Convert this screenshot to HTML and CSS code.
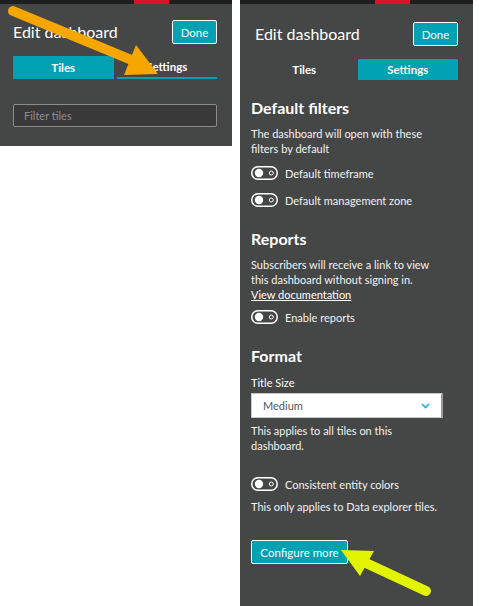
FILE: index.html
```html
<!DOCTYPE html>
<html lang="en">
<head>
<meta charset="utf-8">
<title>Edit dashboard</title>
<link rel="stylesheet" href="styles.css">
</head>
<body>
<div class="page">
  <section class="panel panel-small">
    <div class="topbar"><span class="topbar-red"></span></div>
    <div class="header">
      <h1 class="title">Edit dashboard</h1>
      <button class="btn btn-done">Done</button>
    </div>
    <div class="tabs">
      <div class="tab tab-active">Tiles</div>
      <div class="tab tab-underline">Settings</div>
    </div>
    <div class="filter">Filter tiles</div>
  </section>

  <section class="panel panel-large">
    <div class="topbar"><span class="topbar-red"></span></div>
    <div class="header header-large">
      <h1 class="title">Edit dashboard</h1>
      <button class="btn btn-done">Done</button>
    </div>
    <div class="tabs">
      <div class="tab">Tiles</div>
      <div class="tab tab-active">Settings</div>
    </div>

    <div class="settings">
      <h2 class="heading heading-first">Default filters</h2>
      <p class="text text-after-heading">The dashboard will open with these<br>filters by default</p>
      <div class="toggle-row toggle-first">
        <svg class="toggle" width="27" height="14" viewBox="0 0 27 14"><rect x="0.75" y="0.75" width="25.5" height="12.5" rx="6.25" fill="none" stroke="#fff" stroke-width="1.5"/><circle cx="8" cy="7" r="4.2" fill="#fff"/><circle cx="20.3" cy="7" r="2" fill="none" stroke="#fff" stroke-width="1"/></svg>
        <span>Default timeframe</span>
      </div>
      <div class="toggle-row toggle-next">
        <svg class="toggle" width="27" height="14" viewBox="0 0 27 14"><rect x="0.75" y="0.75" width="25.5" height="12.5" rx="6.25" fill="none" stroke="#fff" stroke-width="1.5"/><circle cx="8" cy="7" r="4.2" fill="#fff"/><circle cx="20.3" cy="7" r="2" fill="none" stroke="#fff" stroke-width="1"/></svg>
        <span>Default management zone</span>
      </div>

      <h2 class="heading heading-section">Reports</h2>
      <p class="text text-after-heading">Subscribers will receive a link to view<br>this dashboard without signing in.<br><a class="link" href="#">View documentation</a></p>
      <div class="toggle-row toggle-reports">
        <svg class="toggle" width="27" height="14" viewBox="0 0 27 14"><rect x="0.75" y="0.75" width="25.5" height="12.5" rx="6.25" fill="none" stroke="#fff" stroke-width="1.5"/><circle cx="8" cy="7" r="4.2" fill="#fff"/><circle cx="20.3" cy="7" r="2" fill="none" stroke="#fff" stroke-width="1"/></svg>
        <span>Enable reports</span>
      </div>

      <h2 class="heading heading-section">Format</h2>
      <div class="label">Title Size</div>
      <div class="select">
        <span>Medium</span>
        <svg class="chevron" width="9" height="6" viewBox="0 0 9 6"><path d="M1 1 L4.5 4.5 L8 1" fill="none" stroke="#1bb5c6" stroke-width="1.6"/></svg>
      </div>
      <p class="text text-after-select">This applies to all tiles on this<br>dashboard.</p>
      <div class="toggle-row toggle-colors">
        <svg class="toggle" width="27" height="14" viewBox="0 0 27 14"><rect x="0.75" y="0.75" width="25.5" height="12.5" rx="6.25" fill="none" stroke="#fff" stroke-width="1.5"/><circle cx="8" cy="7" r="4.2" fill="#fff"/><circle cx="20.3" cy="7" r="2" fill="none" stroke="#fff" stroke-width="1"/></svg>
        <span>Consistent entity colors</span>
      </div>
      <p class="text text-after-toggle">This only applies to Data explorer tiles.</p>
      <button class="btn btn-configure">Configure more</button>
    </div>
  </section>
</div>

<svg class="arrows" width="485" height="606" viewBox="0 0 485 606">
  <line x1="13" y1="11" x2="134" y2="61" stroke="#f5a700" stroke-width="10" stroke-linecap="round"/>
  <polygon points="136,45 124,75 158,74" fill="#f5a700"/>
  <line x1="366" y1="563" x2="426" y2="591" stroke="#e3f400" stroke-width="10" stroke-linecap="round"/>
  <polygon points="341,550 374,551 360,576" fill="#e3f400"/>
</svg>
</body>
</html>
```

FILE: styles.css
```css
* { box-sizing: border-box; }

html, body {
  margin: 0;
  padding: 0;
  background: #ffffff;
}

body {
  position: relative;
  width: 485px;
  height: 606px;
  overflow: hidden;
  font-family: Lato, "Open Sans", sans-serif;
  color: #f2f2f2;
}

.page {
  display: flex;
  align-items: flex-start;
  gap: 8px;
}

.panel {
  background: #454646;
  display: flex;
  flex-direction: column;
}

.panel-small {
  width: 232px;
  height: 146px;
}

.panel-large {
  width: 233px;
  height: 606px;
}

.topbar {
  height: 4px;
  background: #1e1e1e;
  display: flex;
}

.topbar-red {
  width: 35px;
  margin-left: 134px;
  background: #d8142a;
}

.panel-large .topbar-red {
  margin-left: 135px;
}

.header {
  display: flex;
  align-items: center;
  justify-content: space-between;
  padding: 16px 15px 0 13px;
}

.header-large {
  padding: 18px 15px 0 15px;
}

.title {
  margin: 0;
  font-size: 16px;
  font-weight: 400;
  color: #ffffff;
  line-height: 20px;
}

.btn {
  font-family: inherit;
  background: #00a1b2;
  color: #ffffff;
  border: 1px solid #ffffff;
  border-radius: 2px;
  font-size: 11.5px;
  cursor: pointer;
  padding: 0;
}

.btn-done {
  width: 45px;
  height: 24px;
}

.tabs {
  display: grid;
  grid-template-columns: 1fr 1fr;
  column-gap: 3px;
  margin: 12px 15px 0 13px;
  height: 23px;
}

.panel-large .tabs {
  margin: 13px 15px 0 14px;
  height: 21px;
}

.tab {
  display: flex;
  align-items: center;
  justify-content: center;
  font-size: 11.5px;
  font-weight: 700;
  color: #ffffff;
}

.tab-active {
  background: #00a1b2;
}

.tab-underline {
  border-bottom: 2px solid #00a1b2;
}

.filter {
  margin: 25px 15px 0 13px;
  height: 23px;
  border: 1px solid #8c8c8c;
  border-radius: 2px;
  background: #393939;
  color: #8f8f8f;
  font-size: 11px;
  display: flex;
  align-items: center;
  padding-left: 10px;
}

.settings {
  display: flex;
  flex-direction: column;
  align-items: flex-start;
  padding: 0 11px;
}

.heading {
  margin: 0;
  font-size: 16px;
  line-height: 20px;
  font-weight: 700;
  color: #ffffff;
}

.heading-first { margin-top: 18px; }
.heading-section { margin-top: 20px; }

.text {
  margin: 0;
  font-size: 11px;
  line-height: 15px;
  color: #f2f2f2;
}

.text-after-heading { margin-top: 8px; }
.text-after-select { margin-top: 5px; }
.text-after-toggle { margin-top: 6px; }

.link {
  color: #ffffff;
  text-decoration: underline;
}

.toggle-row {
  display: flex;
  align-items: center;
  gap: 7px;
  height: 18px;
  font-size: 11px;
  color: #f2f2f2;
}

.toggle { flex: none; }

.toggle-first { margin-top: 8px; }
.toggle-next { margin-top: 9px; }
.toggle-reports { margin-top: 6px; }
.toggle-colors { margin-top: 22px; }

.label {
  margin-top: 9px;
  font-size: 11px;
  line-height: 15px;
  color: #ffffff;
}

.select {
  margin-top: 3px;
  width: 192px;
  height: 25px;
  background: #ffffff;
  border: 1px solid #c8c8c8;
  border-right: 2px solid #9a9a9a;
  display: flex;
  align-items: center;
  justify-content: space-between;
  padding: 0 11px 0 11px;
  font-size: 11px;
  color: #555555;
}

.btn-configure {
  margin-top: 26px;
  width: 97px;
  height: 24px;
}

.arrows {
  position: absolute;
  top: 0;
  left: 0;
  pointer-events: none;
}
```
